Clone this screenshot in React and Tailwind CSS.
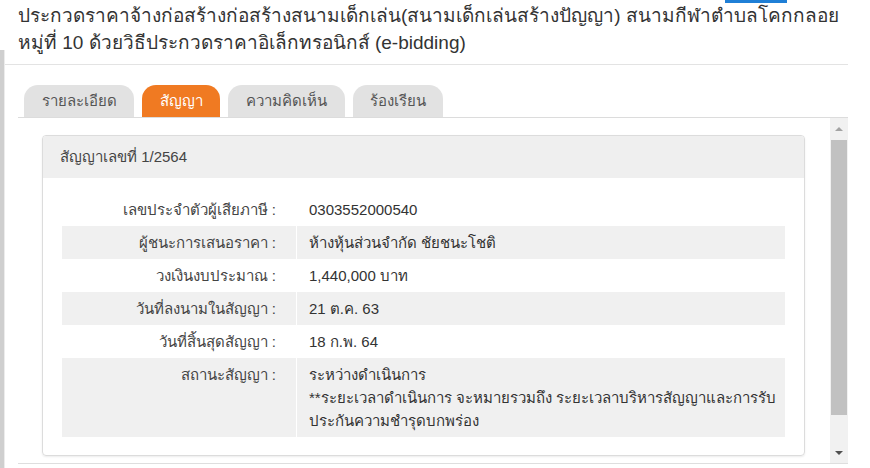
const rows = [
  { label: "เลขประจำตัวผู้เสียภาษี :", value: ["0303552000540"] },
  { label: "ผู้ชนะการเสนอราคา :", value: ["ห้างหุ้นส่วนจำกัด ชัยชนะโชติ"] },
  { label: "วงเงินงบประมาณ :", value: ["1,440,000 บาท"] },
  { label: "วันที่ลงนามในสัญญา :", value: ["21 ต.ค. 63"] },
  { label: "วันที่สิ้นสุดสัญญา :", value: ["18 ก.พ. 64"] },
  {
    label: "สถานะสัญญา :",
    value: [
      "ระหว่างดำเนินการ",
      "**ระยะเวลาดำเนินการ จะหมายรวมถึง ระยะเวลาบริหารสัญญาและการรับ",
      "ประกันความชำรุดบกพร่อง",
    ],
  },
];

const tabs = [
  { name: "รายละเอียด", w: "w-[110px]" },
  { name: "สัญญา", w: "w-[78px]", active: true },
  { name: "ความคิดเห็น", w: "w-[117px]" },
  { name: "ร้องเรียน", w: "w-[90px]" },
];

export default function App() {
  return (
    <div className="flex h-[468px] w-[870px] overflow-hidden bg-white text-[#333] font-['Liberation_Sans',sans-serif]">
      {/* left shadow strip */}
      <div className="flex w-[5px] flex-col">
        <div className="h-[50px]" />
        <div className="flex flex-1">
          <div className="w-[4px] bg-[#cfcfcf]" />
          <div className="w-[1px] bg-[#ececec]" />
        </div>
      </div>

      <div className="relative flex w-[843px] flex-col">
        <div className="absolute left-[720px] top-0 h-[3px] w-[62px] bg-[#1f7fd6]" />

        {/* TITLE */}
        <div className="border-b border-[#e3e3e3] pb-[8px] pl-[13px] pt-[2px]">
          <h1 className="text-[19px] leading-[27px] text-[#333]">
            ประกวดราคาจ้างก่อสร้างก่อสร้างสนามเด็กเล่น(สนามเด็กเล่นสร้างปัญญา) สนามกีฬาตำบลโคกกลอย
            <br />
            หมู่ที่ 10 ด้วยวิธีประกวดราคาอิเล็กทรอนิกส์ (e-bidding)
          </h1>
        </div>

        {/* TABS */}
        <div className="ml-[13px] mt-[20px] flex gap-[8px] border-b border-[#dcdcdc] pl-[6px]">
          {tabs.map((t) => (
            <div
              key={t.name}
              className={`${t.w} flex h-[32px] items-center justify-center rounded-t-[14px] text-[15px] ${
                t.active ? "bg-[#f07a22] text-white" : "bg-[#e2e2e2] text-[#555]"
              }`}
            >
              {t.name}
            </div>
          ))}
        </div>

        {/* SCROLL AREA */}
        <div className="ml-[13px] flex h-[346px] border-b border-[#dedede]">
          <div className="flex-1 pl-[24px] pr-[25px] pt-[17px]">
            <div className="overflow-hidden rounded-[4px] border border-[#dcdcdc] shadow-[0_1px_2px_rgba(0,0,0,0.08)]">
              <div className="flex h-[42px] items-center bg-[#efefef] pl-[17px] text-[15px] text-[#444]">
                สัญญาเลขที่ 1/2564
              </div>
              <div className="px-[19px] pb-[18px] pt-[15px]">
                {rows.map((r, i) => (
                  <div
                    key={i}
                    className={`flex text-[15px] leading-[23px] ${
                      i % 2 === 1 ? "bg-[#f0f0f0]" : "bg-white"
                    }`}
                  >
                    <div className="w-[234px] shrink-0 py-[5px] pr-[20px] text-right text-[#444]">
                      {r.label}
                    </div>
                    <div className="w-[1px] bg-white" />
                    <div className="flex-1 py-[5px] pl-[12px] text-[#333]">
                      {r.value.map((v, j) => (
                        <div key={j} className="whitespace-nowrap">
                          {v}
                        </div>
                      ))}
                    </div>
                  </div>
                ))}
              </div>
            </div>
          </div>

          {/* scrollbar */}
          <div className="flex w-[18px] flex-col items-center bg-[#f1f1f1]">
            <div className="flex h-[22px] items-center justify-center">
              <div className="h-0 w-0 border-x-[4px] border-b-[4px] border-x-transparent border-b-[#a3a3a3]" />
            </div>
            <div className="h-[275px] w-[16px] bg-[#c1c1c1]" />
            <div className="flex-1" />
            <div className="flex h-[20px] items-center justify-center">
              <div className="h-0 w-0 border-x-[4px] border-t-[4px] border-x-transparent border-t-[#505050]" />
            </div>
          </div>
        </div>
      </div>
    </div>
  );
}
